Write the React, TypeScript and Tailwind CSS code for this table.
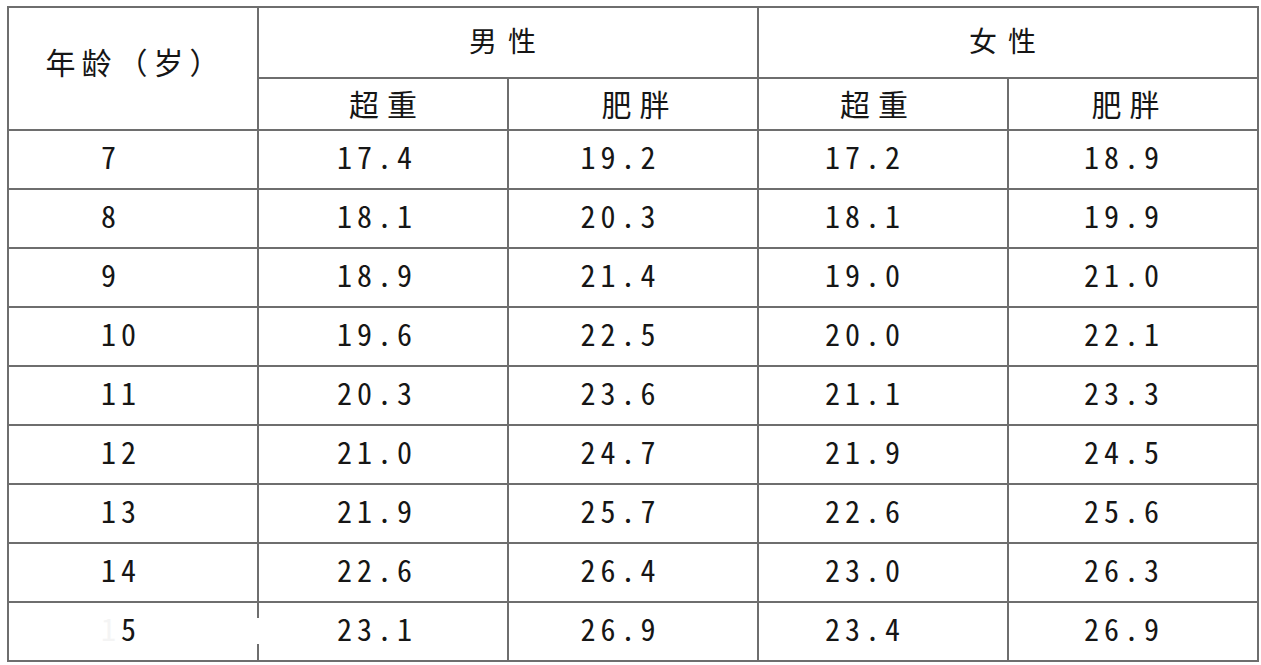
import React from "react";

const rows: [string, string, string, string, string][] = [
  ["7", "17.4", "19.2", "17.2", "18.9"],
  ["8", "18.1", "20.3", "18.1", "19.9"],
  ["9", "18.9", "21.4", "19.0", "21.0"],
  ["10", "19.6", "22.5", "20.0", "22.1"],
  ["11", "20.3", "23.6", "21.1", "23.3"],
  ["12", "21.0", "24.7", "21.9", "24.5"],
  ["13", "21.9", "25.7", "22.6", "25.6"],
  ["14", "22.6", "26.4", "23.0", "26.3"],
  ["15", "23.1", "26.9", "23.4", "26.9"],
];

const dataCellClass = [
  "justify-start pl-[92px]",
  "justify-center pr-[12px]",
  "justify-center pr-[25px]",
  "justify-center pr-[36px]",
  "justify-center pr-[18px]",
];

const cjk = "font-['Noto_Sans_CJK_SC',sans-serif]";
const mono =
  "font-['Noto_Sans_CJK_SC',sans-serif] [font-feature-settings:'hwid']";

export default function App() {
  return (
    <div className="w-[1261px] h-[665px] bg-white overflow-hidden pl-[7px] pt-[6px]">
      <div className="grid grid-cols-[248px_248px_248px_248px_248px] grid-rows-[69px_50px_repeat(9,57px)] gap-[2px] p-[2px] bg-[#6e6e6e] w-max text-[#161616]">
        {/* header */}
        <div
          className={`row-span-2 bg-white flex items-center justify-center pl-[5px] pb-[15px] text-[30px] leading-none tracking-[6px] ${cjk}`}
        >
          年龄（岁）
        </div>
        <div
          className={`col-span-2 bg-white flex items-center justify-center pb-[5px] text-[28px] leading-none tracking-[11px] ${cjk}`}
        >
          男性
        </div>
        <div
          className={`col-span-2 bg-white flex items-center justify-center pb-[5px] text-[28px] leading-none tracking-[11px] ${cjk}`}
        >
          女性
        </div>
        <div
          className={`bg-white flex items-center justify-center pl-[8px] pb-[2px] text-[30px] leading-none tracking-[8px] ${cjk}`}
        >
          超重
        </div>
        <div
          className={`bg-white flex items-center justify-center pl-[13px] pb-[2px] text-[30px] leading-none tracking-[8px] ${cjk}`}
        >
          肥胖
        </div>
        <div
          className={`bg-white flex items-center justify-center pr-[10px] pb-[2px] text-[30px] leading-none tracking-[8px] ${cjk}`}
        >
          超重
        </div>
        <div
          className={`bg-white flex items-center justify-center pr-[7px] pb-[2px] text-[30px] leading-none tracking-[8px] ${cjk}`}
        >
          肥胖
        </div>

        {/* data */}
        {rows.map((r, ri) =>
          r.map((v, ci) => {
            const isLast = ri === rows.length - 1 && ci === 0;
            return (
              <div
                key={`${ri}-${ci}`}
                className={`relative bg-white flex items-center pb-[8px] text-[30px] leading-none tracking-[5px] ${mono} ${dataCellClass[ci]}`}
              >
                {isLast ? (
                  <>
                    <span className="text-[#f4f4f4]">1</span>
                    <span>5</span>
                    <div className="absolute right-[-2px] top-[15px] h-[26px] w-[2px] bg-white" />
                  </>
                ) : (
                  v
                )}
              </div>
            );
          })
        )}
      </div>
    </div>
  );
}
